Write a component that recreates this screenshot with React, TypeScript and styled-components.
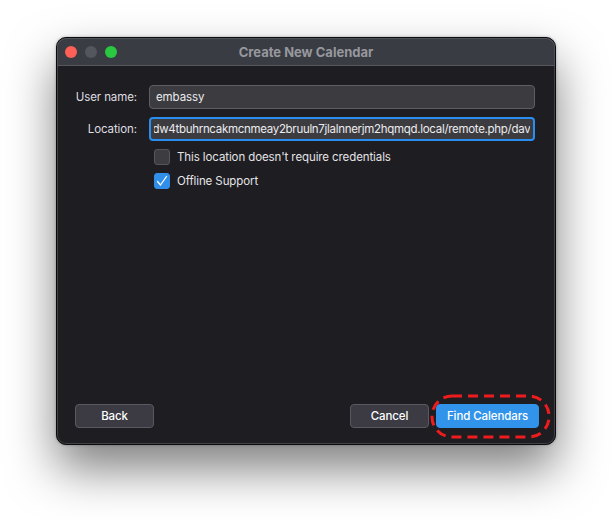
import React, { useLayoutEffect, useRef } from "react";
import styled, { createGlobalStyle } from "styled-components";

const Global = createGlobalStyle`
  html, body { margin: 0; padding: 0; background: #ffffff; }
  body { font-family: Inter, "Liberation Sans", "Noto Sans", sans-serif; -webkit-font-smoothing: antialiased; }
`;

const Page = styled.div`
  width: 612px;
  height: 520px;
  display: flex;
  justify-content: center;
  padding-top: 37px;
  box-sizing: border-box;
`;

const Window = styled.div`
  width: 500px;
  height: 408px;
  box-sizing: border-box;
  border-radius: 10px;
  background: #1e1d22;
  border: 1px solid #0b0b0d;
  box-shadow: inset 0 0 0 1px rgba(255, 255, 255, 0.16), 0 24px 48px rgba(0, 0, 0, 0.5), 0 0 3px rgba(0,0,0,0.3);
  display: flex;
  flex-direction: column;
  overflow: hidden;
`;

const TitleBar = styled.div`
  height: 28px;
  flex: none;
  background: #3a3c44;
  border-bottom: 1px solid #55575d;
  box-sizing: border-box;
  display: flex;
  align-items: center;
  position: relative;
  padding-left: 8px;
  border-radius: 9px 9px 0 0;
  box-shadow: inset 0 1px 0 rgba(255,255,255,0.12), inset 1px 0 0 rgba(255,255,255,0.1), inset -1px 0 0 rgba(255,255,255,0.1);
`;

const Lights = styled.div`
  display: flex;
  gap: 8px;
`;

const Light = styled.span<{ $c: string }>`
  width: 12px;
  height: 12px;
  border-radius: 50%;
  background: ${(p) => p.$c};
`;

const Title = styled.div`
  position: absolute;
  left: 0;
  right: 0;
  text-align: center;
  font-size: 13px;
  font-weight: 700;
  color: #97989d;
  pointer-events: none;
`;

const Body = styled.div`
  flex: 1;
  display: flex;
  flex-direction: column;
  padding: 19px 20px 16px 17px;
  font-size: 11.5px;
  letter-spacing: -0.1px;
`;

const Form = styled.div`
  display: grid;
  grid-template-columns: 63px 1fr;
  column-gap: 12px;
  row-gap: 8px;
  align-items: center;
`;

const Label = styled.label`
  color: #dedee0;
  text-align: right;
  white-space: nowrap;
  justify-self: end;
`;

const Field = styled.input<{ $focus?: boolean }>`
  height: 24px;
  width: 100%;
  box-sizing: border-box;
  border-radius: 4px;
  background: #3b3b40;
  border: ${(p) => (p.$focus ? "2px solid #2a8ef0" : "1px solid #5e5e63")};
  padding: 0 ${(p) => (p.$focus ? "3px" : "6px")};
  margin: 0;
  outline: none;
  font-family: inherit;
  font-size: 11.5px;
  letter-spacing: ${(p) => (p.$focus ? "-0.3px" : "-0.1px")};
  color: #ececee;
`;

const CheckRow = styled.div`
  grid-column: 2;
  display: flex;
  align-items: center;
  gap: 7px;
  padding-left: 5px;
  color: #e4e4e6;
`;

const Box = styled.span<{ $on?: boolean }>`
  width: 16px;
  height: 16px;
  box-sizing: border-box;
  border-radius: 3px;
  background: ${(p) => (p.$on ? "#2f8fe9" : "#3c3c41")};
  border: 1px solid ${(p) => (p.$on ? "#2f8fe9" : "#55555a")};
  display: flex;
  align-items: center;
  justify-content: center;
`;

const Spacer = styled.div`
  flex: 1;
`;

const Footer = styled.div`
  display: flex;
  align-items: center;
  gap: 7px;
  margin-right: -4px;
  margin-left: 1px;
`;

const Button = styled.button<{ $primary?: boolean; $w: number }>`
  width: ${(p) => p.$w}px;
  height: 24px;
  box-sizing: border-box;
  border-radius: 4px;
  font-family: inherit;
  font-size: 11.5px;
  letter-spacing: -0.1px;
  font-weight: 500;
  color: #ffffff;
  background: ${(p) => (p.$primary ? "#3293ea" : "#3c3b44")};
  border: 1px solid ${(p) => (p.$primary ? "#3293ea" : "#5a5961")};
  padding: 0;
  position: relative;
`;

const Mark = styled.svg`
  position: absolute;
  left: -7px;
  top: -11px;
  overflow: visible;
  pointer-events: none;
`;

const URL = "http://embassy.ndw4tbuhrncakmcnmeay2bruuln7jlalnnerjm2hqmqd.local/remote.php/dav";

export default function App() {
  const loc = useRef<HTMLInputElement>(null);
  useLayoutEffect(() => {
    const el = loc.current;
    if (el) el.scrollLeft = el.scrollWidth;
  }, []);
  return (
    <>
      <Global />
      <Page>
        <Window>
          <TitleBar>
            <Lights>
              <Light $c="#fe5f57" />
              <Light $c="#54565e" />
              <Light $c="#2ac840" />
            </Lights>
            <Title>Create New Calendar</Title>
          </TitleBar>
          <Body>
            <Form>
              <Label htmlFor="user">User name:</Label>
              <Field id="user" defaultValue="embassy" readOnly />
              <Label htmlFor="loc">Location:</Label>
              <Field id="loc" ref={loc} $focus defaultValue={URL} readOnly />
              <CheckRow>
                <Box />
                This location doesn't require credentials
              </CheckRow>
              <CheckRow>
                <Box $on>
                  <svg width="14" height="14" viewBox="0 0 14 14">
                    <path d="M2.5 7.5 L5.5 11 L11.5 2.5" fill="none" stroke="#ffffff" strokeWidth="1.3" strokeLinecap="round" strokeLinejoin="round" />
                  </svg>
                </Box>
                Offline Support
              </CheckRow>
            </Form>
            <Spacer />
            <Footer>
              <Button $w={79}>Back</Button>
              <Spacer />
              <Button $w={79}>Cancel</Button>
              <Button $primary $w={103}>
                Find Calendars
                <Mark width="121" height="45" viewBox="0 0 121 45">
                  <rect x="2" y="2" width="117" height="41" rx="20" ry="20" fill="none" stroke="#ee1c1c" strokeWidth="3" strokeDasharray="10 6" />
                </Mark>
              </Button>
            </Footer>
          </Body>
        </Window>
      </Page>
    </>
  );
}
